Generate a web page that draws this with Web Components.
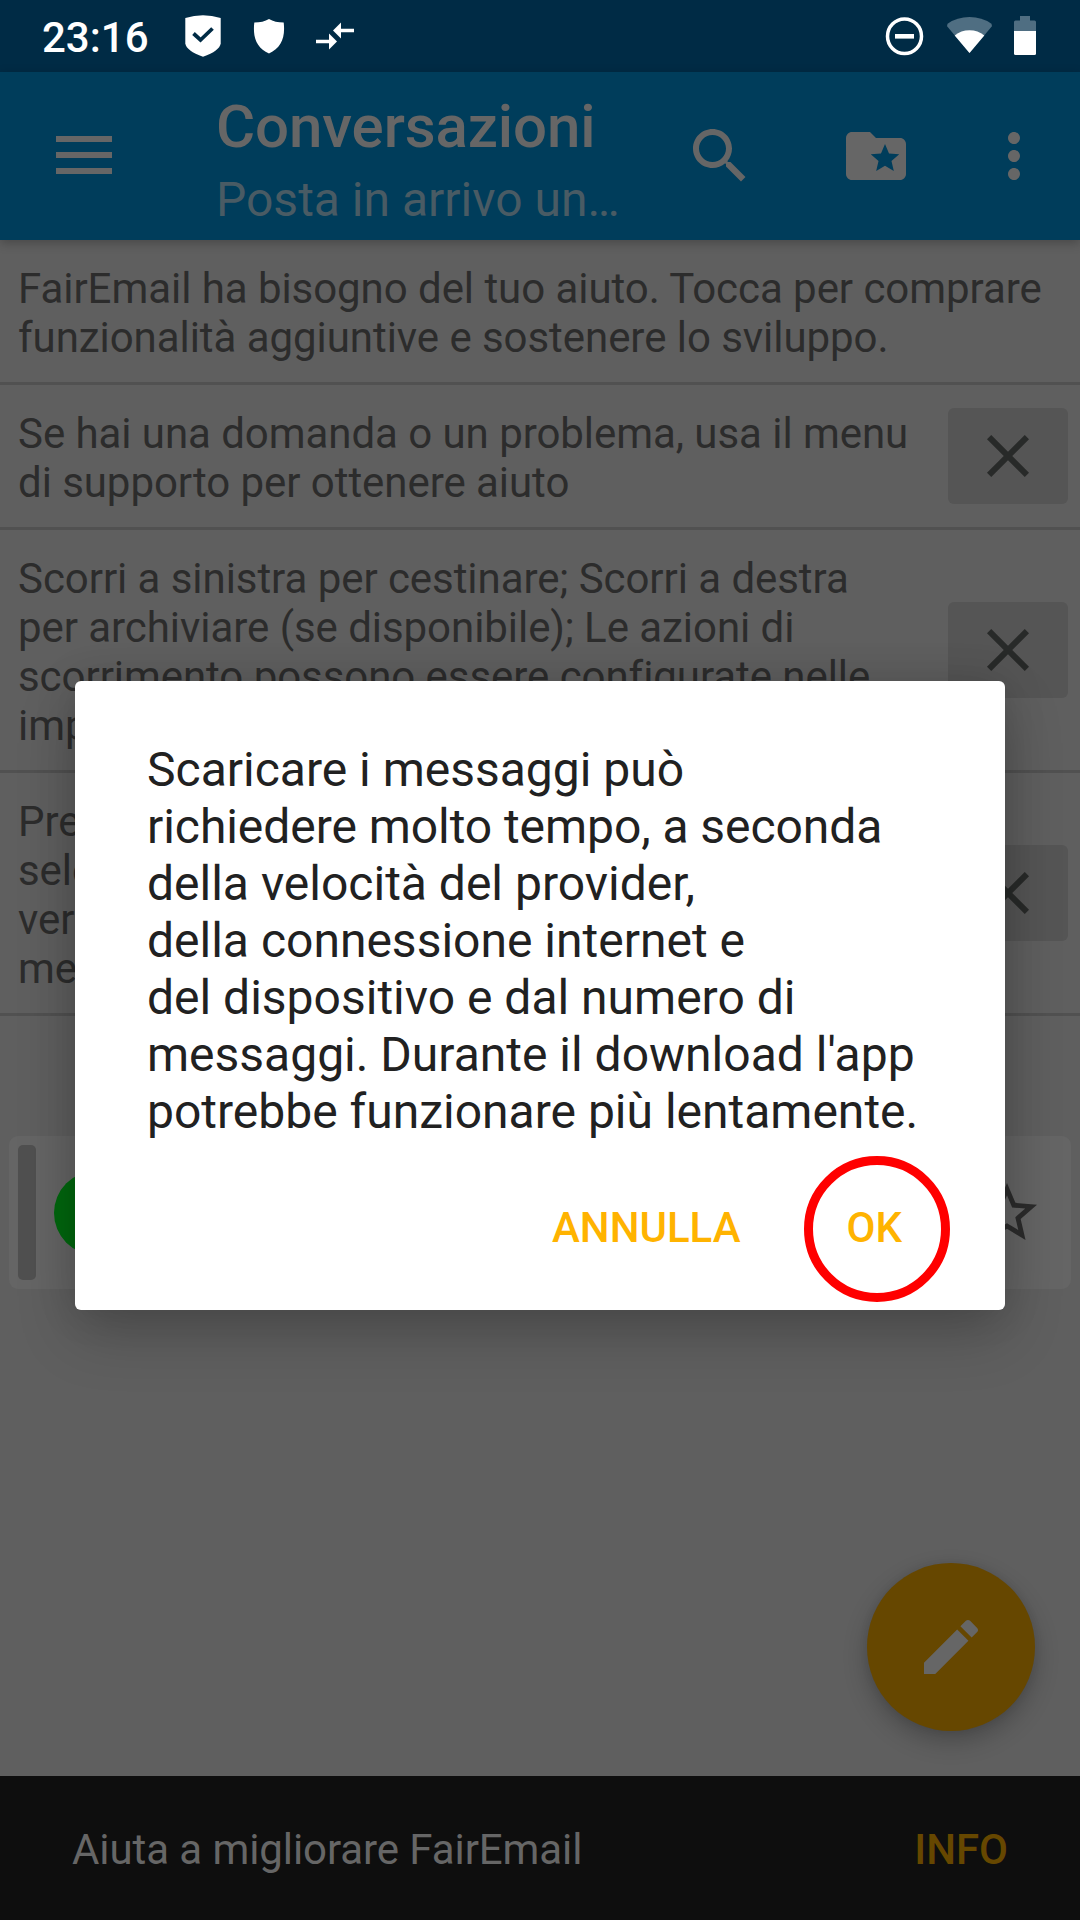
<!DOCTYPE html>
<html lang="it">
<head>
<meta charset="utf-8">
<title>FairEmail</title>
<style>
html,body{margin:0;padding:0}
body{width:1080px;height:1920px;overflow:hidden;background:#5f5f5f;font-family:Roboto,"Noto Sans",sans-serif}
</style>
</head>
<body>
<mail-app></mail-app>
<script>
function define(name, html) {
  const tpl = document.createElement('template');
  tpl.innerHTML = html;
  customElements.define(name, class extends HTMLElement {
    constructor() {
      super();
      this.attachShadow({ mode: 'open' }).appendChild(tpl.content.cloneNode(true));
    }
  });
}

const ICONS = {
  search: 'M15.5 14h-.79l-.28-.27C15.41 12.59 16 11.11 16 9.5 16 5.91 13.09 3 9.5 3S3 5.91 3 9.5 5.91 16 9.5 16c1.61 0 3.09-.59 4.23-1.57l.27.28v.79l5 4.99L20.49 19l-4.99-5zm-6 0C7.01 14 5 11.99 5 9.5S7.01 5 9.5 5 14 7.01 14 9.5 11.99 14 9.5 14z',
  folder: 'M20 6h-8l-2-2H4c-1.1 0-1.99.9-1.99 2L2 18c0 1.1.9 2 2 2h16c1.1 0 2-.9 2-2V8c0-1.1-.9-2-2-2zm-2.06 11L15 15.28 12.06 17l.78-3.33-2.59-2.24 3.41-.29L15 8l1.34 3.14 3.41.29-2.59 2.24.78 3.33z',
  more: 'M12 8c1.1 0 2-.9 2-2s-.9-2-2-2-2 .9-2 2 .9 2 2 2zm0 2c-1.1 0-2 .9-2 2s.9 2 2 2 2-.9 2-2-.9-2-2-2zm0 6c-1.1 0-2 .9-2 2s.9 2 2 2 2-.9 2-2-.9-2-2-2z',
  close: 'M19 6.41L17.59 5 12 10.59 6.41 5 5 6.41 10.59 12 5 17.59 6.41 19 12 13.41 17.59 19 19 17.59 13.41 12z',
  star: 'M22 9.24l-7.19-.62L12 2 9.19 8.63 2 9.24l5.46 4.73L5.82 21 12 17.27 18.18 21l-1.63-7.03L22 9.24zM12 15.4l-3.76 2.27 1-4.28-3.32-2.88 4.38-.38L12 6.1l1.71 4.04 4.38.38-3.32 2.88 1 4.28L12 15.4z',
  edit: 'M3 17.25V21h3.75L17.81 9.94l-3.75-3.75L3 17.25zM20.71 7.04c.39-.39.39-1.02 0-1.41l-2.34-2.34c-.39-.39-1.02-.39-1.41 0l-1.83 1.83 3.75 3.75 1.83-1.83z'
};
customElements.define('md-icon', class extends HTMLElement {
  constructor() {
    super();
    this.attachShadow({ mode: 'open' });
  }
  connectedCallback() {
    this.shadowRoot.innerHTML = `<style>:host{display:block;width:72px;height:72px;flex:none}svg{display:block}</style>
      <svg width="72" height="72" viewBox="0 0 24 24" fill="currentColor"><path d="${ICONS[this.getAttribute('name')]}"/></svg>`;
  }
});

define('status-bar', `<style>
:host{display:flex;height:72px;flex:none;background:#002b45;color:#fff;box-sizing:border-box;padding-left:42px;justify-content:space-between}
.side{display:flex}
time{font-size:42px;font-weight:500;line-height:49px;padding-top:13px;width:142px;white-space:nowrap}
svg{display:block}
</style>
<div class="side"><time>23:16</time>
<svg width="180" height="72" viewBox="184 0 180 72" fill="#fff">
<path d="M185.300 18Q203 12.500 220.700 18V43.500Q219.500 51 203 56.700Q186.500 51 185.300 43.500Z"/>
<path d="M193.500 33.500L200.500 40L212.500 28.500" fill="none" stroke="#002b45" stroke-width="3.800"/>
<path d="M254.300 22.500Q263 22.500 269 19Q275 22.500 283.700 22.500C285.500 38 281 48 269 53.500C257 48 252.500 38 254.300 22.500Z"/>
<path d="M316 39.800h13v-6.300l8 8-8 8v-6.300h-13zM354 28.700h-13v-6.200l-8 8 8 8v-6.300h13z"/>
</svg></div>
<svg width="200" height="72" viewBox="880 0 200 72">
<ellipse cx="904.500" cy="36.300" rx="17" ry="17.300" fill="none" stroke="#fff" stroke-width="3.500"/>
<rect x="895" y="34" width="19" height="4.600" fill="#fff"/>
<path d="M969.500 53L947.300 26.500Q946.500 25 948 23.500Q957 17 969.500 17T991 23.500Q992.500 25 991.700 26.500Z" fill="#4f6e82"/>
<path d="M969.500 53L954.700 35.500Q961 30.200 969.500 30.200T984.300 35.500Z" fill="#fff"/>
<path d="M1014 31V22Q1014 20.500 1015.500 20.500H1020V16H1030V20.500H1034.500Q1036 20.500 1036 22V31Z" fill="#4f6e82"/>
<path d="M1014 31H1036V53.500Q1036 55 1034.500 55H1015.500Q1014 55 1014 53.500Z" fill="#fff"/>
</svg>`);

define('app-bar', `<style>
:host{display:flex;height:168px;flex:none;background:#003d5b;color:#666;box-sizing:border-box;padding:0 30px 0 56px;align-items:flex-start;box-shadow:0 3px 10px rgba(0,0,0,.25);position:relative;z-index:1}
.menu{display:flex;flex-direction:column;gap:10px;margin-top:64px;width:56px}
.menu i{height:6px;background:#666}
.titles{margin-left:104px;width:468px;white-space:nowrap}
.title{font-size:60px;font-weight:500;line-height:70px;margin-top:20px;letter-spacing:-.1px}
.sub{font-size:48px;line-height:56px;margin-top:10px;color:#495b64}
.actions{display:flex;margin-top:48px}
md-icon + md-icon{margin-left:84px}
md-icon:last-child{margin-left:66px}
</style>
<div class="menu"><i></i><i></i><i></i></div>
<div class="titles"><div class="title">Conversazioni</div><div class="sub">Posta in arrivo un…</div></div>
<div class="actions"><md-icon name="search"></md-icon><md-icon name="folder"></md-icon><md-icon name="more"></md-icon></div>`);

define('close-button', `<style>
:host{display:flex;width:120px;height:96px;flex:none;border-radius:6px;background:#555;color:#282a29;align-items:center;justify-content:center}
</style><md-icon name="close"></md-icon>`);

define('hint-row', `<style>
:host{display:flex;align-items:center;justify-content:space-between;border-bottom:3px solid #515151;padding-right:12px}
.text{padding:24px 0 20px 18px;font-size:42px;line-height:49px;color:#2c2c2c;white-space:nowrap;letter-spacing:-.055px}
</style><div class="text"><slot></slot></div><slot name="action"></slot>`);

define('message-card', `<style>
:host{display:flex;align-items:center;margin:120px 9px 0;height:153px;box-sizing:border-box;border-radius:9px;background:#656565;padding:9px 28px 9px 9px;color:#2c2c2c}
.stripe{width:18px;height:135px;border-radius:5px;background:#505050}
.avatar{width:84px;height:84px;border-radius:50%;background:#00680e;margin-left:18px;margin-right:auto}
</style><div class="stripe"></div><div class="avatar"></div><md-icon name="star"></md-icon>`);

define('compose-button', `<style>
:host{position:absolute;right:45px;bottom:189px;width:168px;height:168px;border-radius:50%;background:#664700;color:#666;display:flex;align-items:center;justify-content:center;box-shadow:0 10px 24px rgba(0,0,0,.24),0 0 9px rgba(0,0,0,.08)}
</style><md-icon name="edit"></md-icon>`);

define('snack-bar', `<style>
:host{display:flex;height:144px;flex:none;box-sizing:border-box;margin-top:auto;padding:49px 72px 0;justify-content:space-between;background:#0e0e0e;color:#666;font-size:42px;line-height:49px;white-space:nowrap}
span{letter-spacing:-.08px}
b{font-weight:500;color:#664700}
</style><span><slot></slot></span><b><slot name="action"></slot></b>`);

define('alert-dialog', `<style>
:host{position:absolute;inset:0;z-index:2;display:flex;align-items:center;justify-content:center;padding-top:71px}
.box{width:930px;height:629px;box-sizing:border-box;border-radius:6px;background:#fff;padding:60px 72px 0;box-shadow:0 24px 60px rgba(0,0,0,.2),0 0 42px rgba(0,0,0,.13)}
.text{font-size:48px;line-height:57px;color:#212121;white-space:nowrap}
.buttons{display:flex;justify-content:flex-end;margin-top:63px;padding-right:31px;gap:106px;font-size:42px;font-weight:500;line-height:49px;color:#ffb300}
.ok{position:relative}
.ring{position:absolute;width:146px;height:146px;box-sizing:border-box;border:8.600px solid #f00;border-width:9px;border-radius:50%;left:-43px;top:-47px}
</style>
<div class="box"><div class="text"><slot></slot></div>
<div class="buttons"><span>ANNULLA</span><span class="ok">OK<i class="ring"></i></span></div></div>`);

define('mail-app', `<style>
:host{display:flex;flex-direction:column;position:relative;width:1080px;height:1920px;overflow:hidden;background:#5f5f5f}
.tight{letter-spacing:-.06px}
</style>
<status-bar></status-bar>
<app-bar></app-bar>
<main>
<hint-row>FairEmail ha bisogno del tuo aiuto. Tocca per comprare<br>funzionalità aggiuntive e sostenere lo sviluppo.</hint-row>
<hint-row>Se hai una domanda o un problema, usa il menu<br>di supporto per ottenere aiuto<close-button slot="action"></close-button></hint-row>
<hint-row>Scorri a sinistra per cestinare; Scorri a destra<br>per archiviare (se disponibile); Le azioni di<br>scorrimento possono essere configurate nelle<br>imp<close-button slot="action"></close-button></hint-row>
<hint-row>Pre<br>sele<br>ver<br>me<close-button slot="action"></close-button></hint-row>
<message-card></message-card>
</main>
<snack-bar>Aiuta a migliorare FairEmail<span slot="action">INFO</span></snack-bar>
<compose-button></compose-button>
<alert-dialog>Scaricare i messaggi può<br><span class="tight">richiedere molto tempo, a seconda</span><br>della velocità del provider,<br>della connessione internet e<br>del dispositivo e dal numero di<br>messaggi. Durante il download l'app<br>potrebbe funzionare più lentamente.</alert-dialog>`);
</script>
</body>
</html>
